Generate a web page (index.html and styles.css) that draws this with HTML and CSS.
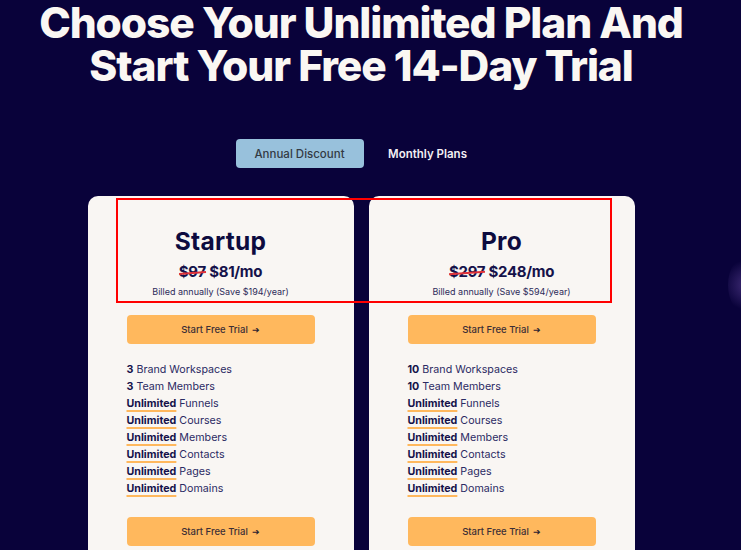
FILE: index.html
```html
<!DOCTYPE html>
<html lang="en">
<head>
<meta charset="utf-8">
<title>Pricing</title>
<link rel="stylesheet" href="styles.css">
</head>
<body>
<main class="page">
  <h1 class="title">Choose Your Unlimited Plan And<br>Start Your Free 14-Day Trial</h1>
  <div class="tabs">
    <button class="tab tab-active">Annual Discount</button>
    <button class="tab">Monthly Plans</button>
  </div>
  <div class="cards">
    <section class="card">
      <h2 class="plan">Startup</h2>
      <p class="price"><s class="old">$97</s> $81/mo</p>
      <p class="billed">Billed annually (Save $194/year)</p>
      <a class="cta">Start Free Trial <span class="arrow">&#x2794;</span></a>
      <ul class="features">
        <li><b>3</b> Brand Workspaces</li>
        <li><b>3</b> Team Members</li>
        <li><b class="u">Unlimited</b> Funnels</li>
        <li><b class="u">Unlimited</b> Courses</li>
        <li><b class="u">Unlimited</b> Members</li>
        <li><b class="u">Unlimited</b> Contacts</li>
        <li><b class="u">Unlimited</b> Pages</li>
        <li><b class="u">Unlimited</b> Domains</li>
      </ul>
      <a class="cta">Start Free Trial <span class="arrow">&#x2794;</span></a>
    </section>
    <section class="card">
      <h2 class="plan">Pro</h2>
      <p class="price"><s class="old">$297</s> $248/mo</p>
      <p class="billed">Billed annually (Save $594/year)</p>
      <a class="cta">Start Free Trial <span class="arrow">&#x2794;</span></a>
      <ul class="features">
        <li><b>10</b> Brand Workspaces</li>
        <li><b>10</b> Team Members</li>
        <li><b class="u">Unlimited</b> Funnels</li>
        <li><b class="u">Unlimited</b> Courses</li>
        <li><b class="u">Unlimited</b> Members</li>
        <li><b class="u">Unlimited</b> Contacts</li>
        <li><b class="u">Unlimited</b> Pages</li>
        <li><b class="u">Unlimited</b> Domains</li>
      </ul>
      <a class="cta">Start Free Trial <span class="arrow">&#x2794;</span></a>
    </section>
  </div>
  <div class="highlight"></div>
  <div class="glow"></div>
</main>
</body>
</html>
```
FILE: styles.css
```css
html, body {
  margin: 0;
  padding: 0;
  background: #09023a;
  overflow: hidden;
}
.page {
  position: relative;
  width: 741px;
  height: 550px;
  box-sizing: border-box;
  padding: 0 19px 0 0;
  display: flex;
  flex-direction: column;
  align-items: center;
  font-family: "Inter", "Liberation Sans", sans-serif;
}
.title {
  margin: 0;
  padding-top: 1px;
  font-family: "Inter", sans-serif;
  font-weight: 800;
  font-size: 42.5px;
  line-height: 43px;
  letter-spacing: -1.1px;
  color: #faf7f3;
  text-align: center;
}
.tabs {
  display: flex;
  margin-top: 52px;
  margin-left: 5px;
}
.tab {
  width: 128px;
  height: 29px;
  border: none;
  border-radius: 4px;
  background: transparent;
  font-family: "Inter", sans-serif;
  font-size: 11.5px;
  font-weight: 600;
  color: #f3f0f4;
  padding: 0;
}
.tab-active {
  background: #98c1dc;
  color: #333a44;
  font-weight: 500;
}
.cards {
  display: flex;
  gap: 15px;
  margin-top: 28px;
}
.card {
  width: 266px;
  height: 400px;
  box-sizing: border-box;
  background: #f9f6f3;
  border-radius: 10px;
  padding: 0 39px;
  display: flex;
  flex-direction: column;
  align-items: stretch;
  color: #15124a;
}
.plan {
  margin: 31px 0 0;
  font-size: 24.5px;
  line-height: 28px;
  font-weight: 700;
  letter-spacing: 0.3px;
  text-align: center;
  color: #0d0b3f;
}
.price {
  margin: 8px 0 0;
  font-size: 15px;
  line-height: 18px;
  font-weight: 700;
  text-align: center;
  color: #15124a;
  letter-spacing: -0.3px;
}
.old {
  text-decoration: none;
  position: relative;
}
.old::after {
  content: "";
  position: absolute;
  left: 0;
  right: 0;
  top: 55%;
  height: 1.5px;
  background: #e0323a;
  transform: rotate(-4deg);
}
.billed {
  margin: 5px 0 0;
  font-size: 9px;
  line-height: 12px;
  text-align: center;
  color: #2d2b5a;
}
.cta {
  display: flex;
  align-items: center;
  justify-content: center;
  height: 29px;
  margin-top: 17px;
  border-radius: 4px;
  background: #ffb85d;
  color: #3b2e36;
  font-size: 9.5px;
  font-weight: 500;
}
.arrow {
  font-size: 9px;
  margin-left: 4px;
  color: #2a2030;
}
.features {
  list-style: none;
  margin: 17px 0 0;
  padding: 0;
  font-size: 10.7px;
  line-height: 17px;
  color: #2b2a63;
}
.features b {
  color: #15124a;
  font-weight: 700;
}
.features .u {
  text-decoration: underline;
  text-decoration-color: #ffb85d;
  text-decoration-thickness: 2px;
  text-underline-offset: 3px;
}
.features + .cta {
  margin-top: 20px;
}
.highlight {
  position: absolute;
  left: 116px;
  top: 198px;
  width: 496px;
  height: 105px;
  box-sizing: border-box;
  border: 2px solid #ff0000;
}
.glow {
  position: absolute;
  left: 728px;
  top: 255px;
  width: 40px;
  height: 60px;
  border-radius: 50%;
  background: radial-gradient(circle, rgba(110, 80, 170, 0.55), rgba(110, 80, 170, 0) 70%);
}
```
